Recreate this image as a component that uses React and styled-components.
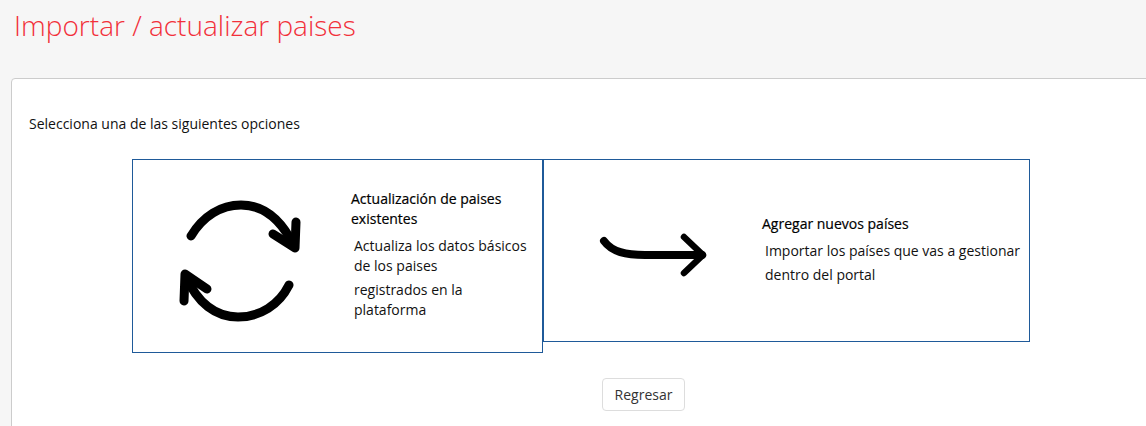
import React from "react";
import styled, { createGlobalStyle } from "styled-components";

const GlobalStyle = createGlobalStyle`
  html, body {
    margin: 0;
    padding: 0;
    height: 426px;
    overflow: hidden;
    background-color: #f6f6f6;
    font-family: "Open Sans", "Liberation Sans", sans-serif;
    color: #111;
  }
  * {
    box-sizing: border-box;
  }
`;

const Page = styled.div`
  width: 1146px;
  height: 426px;
  overflow: hidden;
  padding: 6px 0 0 11px;
`;

const Title = styled.h1`
  margin: 0 0 33px 3px;
  font-size: 28px;
  line-height: 39px;
  font-weight: 300;
  color: #f2303a;
`;

const Panel = styled.div`
  width: 1265px;
  height: 400px;
  background-color: #fff;
  border: 1px solid #ccc;
  border-radius: 4px;
  padding: 35px 17px 0;
`;

const Intro = styled.p`
  margin: 0 0 26px;
  font-size: 14px;
  line-height: 19px;
`;

const Options = styled.div`
  display: flex;
  align-items: flex-start;
  margin-left: 103px;
`;

const Card = styled.div`
  display: flex;
  align-items: center;
  width: ${(p) => p.$width}px;
  height: ${(p) => p.$height}px;
  border: 1px solid #1f5a99;
`;

const IconBox = styled.div`
  flex: none;
  width: 218px;
  display: flex;
  justify-content: center;
  padding: ${(p) => p.$top || 0}px ${(p) => p.$right || 0}px 0 ${(p) => p.$left || 0}px;
`;

const CardText = styled.div`
  flex: 1;
  padding: 0 8px ${(p) => p.$bottom || 0}px 0;
  font-size: 14px;
`;

const CardTitle = styled.h3`
  margin: 0 0 ${(p) => p.$gap}px;
  font-size: 14px;
  line-height: 20px;
  font-weight: 500;
  color: #000;
  -webkit-text-stroke: 0.2px #000;
`;

const CardBody = styled.p`
  margin: 0 0 ${(p) => p.$gap || 0}px 3px;
  line-height: ${(p) => p.$line || 20}px;
`;

const Actions = styled.div`
  display: flex;
  justify-content: center;
  margin-top: ${(p) => p.$top}px;
`;

const BackButton = styled.button`
  width: 83px;
  height: 33px;
  padding: 0;
  background-color: #fff;
  border: 1px solid #ddd;
  border-radius: 4px;
  font-family: inherit;
  font-size: 14px;
  color: #333;
`;

const SyncIcon = () => (
  <svg width="130" height="130" viewBox="175 197 130 130" fill="none" stroke="#000" strokeWidth="9" strokeLinecap="round" strokeLinejoin="round">
    <path d="M191 236 C 203 216, 221 205, 241 205 C 263 205, 281 219, 294 246" />
    <path d="M296 222 L 295 248 L 273 234" />
    <path d="M289 285 C 279 305, 260 317, 238 317 C 216 317, 197 303, 186 276" />
    <path d="M184 301 L 185 274 L 207 289" />
  </svg>
);

const ArrowIcon = () => (
  <svg width="116" height="50" viewBox="596 230 116 50" fill="none" stroke="#000" strokeLinecap="round" strokeLinejoin="round">
    <path d="M604 241 C 612 252, 626 255, 645 255 L 702 255" strokeWidth="8" />
    <path d="M684 237 L 703 255 L 684 273" strokeWidth="6.5" />
  </svg>
);

const App = () => {
  return (
    <>
      <GlobalStyle />
      <Page>
        <Title>Importar / actualizar paises</Title>
        <Panel>
          <Intro>Selecciona una de las siguientes opciones</Intro>
          <Options>
            <Card $width={411} $height={194}>
              <IconBox $top={12} $right={4}>
                <SyncIcon />
              </IconBox>
              <CardText $bottom={4}>
                <CardTitle $gap={7}>Actualización de paises existentes</CardTitle>
                <CardBody $gap={4}>Actualiza los datos básicos de los paises</CardBody>
                <CardBody>registrados en la plataforma</CardBody>
              </CardText>
            </Card>
            <Card $width={487} $height={183}>
              <IconBox $top={8} $left={1}>
                <ArrowIcon />
              </IconBox>
              <CardText>
                <CardTitle $gap={5}>Agregar nuevos países</CardTitle>
                <CardBody $line={24}>Importar los países que vas a gestionar dentro del portal</CardBody>
              </CardText>
            </Card>
          </Options>
          <Actions $top={25}>
            <BackButton>Regresar</BackButton>
          </Actions>
        </Panel>
      </Page>
    </>
  );
};

export default App;
